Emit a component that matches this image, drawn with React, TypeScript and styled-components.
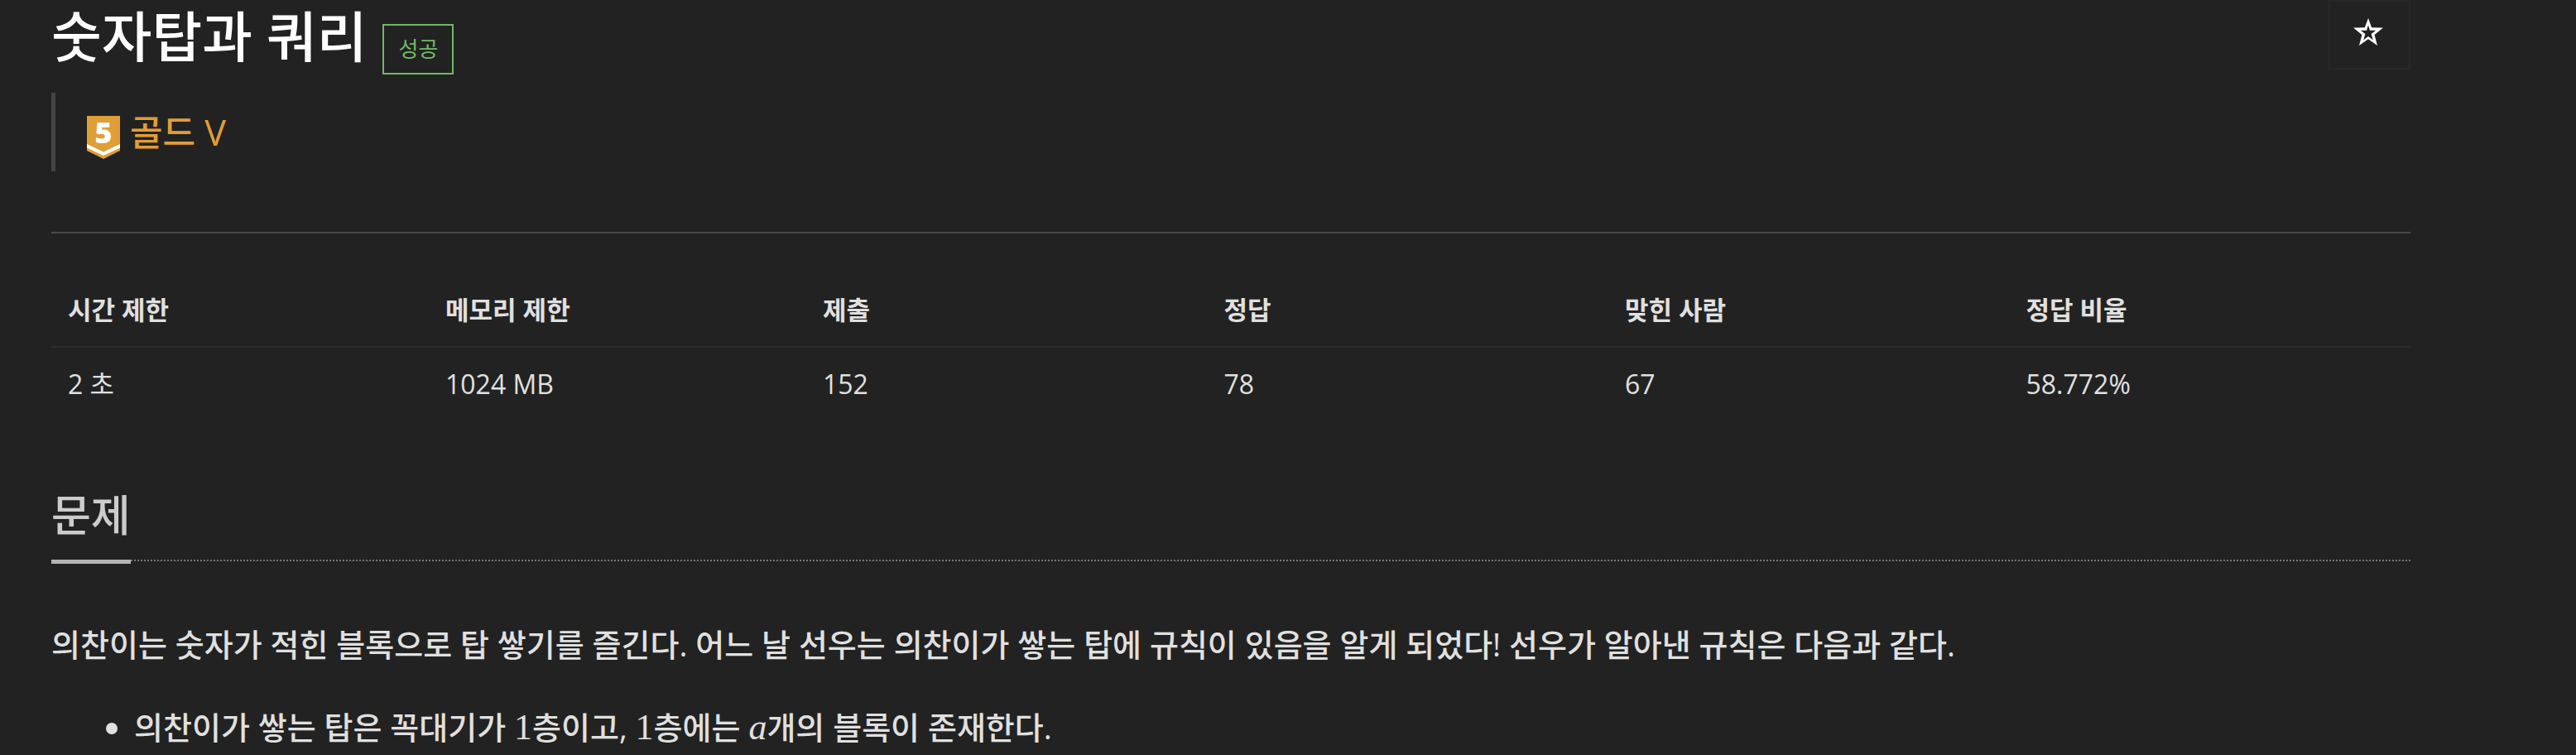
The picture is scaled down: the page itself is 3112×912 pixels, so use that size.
import React from "react";
import styled, { createGlobalStyle } from "styled-components";

const GlobalStyle = createGlobalStyle`
  *, *::before, *::after { box-sizing: border-box; }
  body {
    margin: 0;
    background: #222;
    color: #e0e0e0;
    font-family: "Open Sans", "Noto Sans CJK KR", sans-serif;
  }
`;

const Page = styled.main`
  padding: 0 200px 0 62px;
`;

const Header = styled.header`
  display: flex;
  justify-content: space-between;
  align-items: flex-start;
`;

const TitleGroup = styled.div`
  display: flex;
  align-items: flex-end;
  gap: 19px;
`;

const Title = styled.h1`
  margin: 0;
  padding-bottom: 4px;
  font-size: 66px;
  line-height: 86px;
  font-weight: 500;
  color: #fff;
`;

const ResultLabel = styled.span`
  border: 2px solid #72b866;
  padding: 0 17px;
  font-size: 26px;
  line-height: 57px;
  color: #72b866;
`;

const FavoriteButton = styled.button`
  display: flex;
  align-items: center;
  justify-content: center;
  width: 99px;
  height: 84px;
  padding: 0 4px 8px 0;
  border: 2px solid #272727;
  background: #222;
  cursor: pointer;
`;

const Tier = styled.blockquote`
  display: flex;
  align-items: center;
  gap: 12px;
  height: 95px;
  margin: 22px 0 73px;
  padding-left: 38px;
  border-left: 5px solid #444;
  font-size: 43px;
  line-height: 60px;
  font-weight: 500;
  color: #e09e37;

  svg {
    position: relative;
    top: 6px;
    overflow: visible;
  }
`;

const Divider = styled.hr`
  margin: 0 0 40px;
  border: 0;
  border-top: 2px solid #4a4a4a;
`;

const InfoTable = styled.table`
  width: 100%;
  table-layout: fixed;
  border-collapse: collapse;
  line-height: 56px;
  text-align: left;

  th {
    padding: 24px 20px 16px;
    border-bottom: 2px solid #2d2d2d;
    font-size: 31px;
    font-weight: 700;
  }

  td {
    padding: 16px 20px;
    font-size: 32px;
  }
`;

const Column = styled.col<{ $share: number }>`
  width: ${({ $share }) => $share}%;
`;

const SectionHeading = styled.div`
  display: flex;
  margin-top: 76px;
  border-bottom: 2px dotted #777;
`;

const SectionTitle = styled.h2`
  margin: 0 0 -5px;
  padding-bottom: 16px;
  border-bottom: 5px solid #b5b5b5;
  font-size: 52px;
  line-height: 76px;
  font-weight: 500;
  color: #ccc;
`;

const Description = styled.section`
  font-size: 38px;
  line-height: 60px;
  font-weight: 500;

  p {
    margin: 70px 0 40px;
  }

  ul {
    margin: 0;
    padding-left: 100px;
  }
`;

const MathText = styled.span`
  font-family: "Liberation Serif", serif;
  font-size: 44px;
  line-height: 1;
`;

const columns = [
  { name: "시간 제한", value: "2 초", share: 16 },
  { name: "메모리 제한", value: "1024 MB", share: 16 },
  { name: "제출", value: "152", share: 17 },
  { name: "정답", value: "78", share: 17 },
  { name: "맞힌 사람", value: "67", share: 17 },
  { name: "정답 비율", value: "58.772%", share: 17 },
];

function TierBadge() {
  return (
    <svg width="40" height="52" viewBox="0 0 40 52" aria-hidden="true">
      <path d="M0 0H40V42L20 52L0 42Z" fill="#e09e37" />
      <path d="M0 34L20 43.500L40 34V38.500L20 48L0 38.500Z" fill="#fff" />
      <text
        x="20"
        y="33"
        textAnchor="middle"
        fontFamily="Open Sans, sans-serif"
        fontSize="36"
        fontWeight="800"
        fill="#fff"
      >
        5
      </text>
    </svg>
  );
}

function StarIcon() {
  return (
    <svg width="36" height="33" viewBox="0 0 36 33" aria-hidden="true">
      <path
        fillRule="evenodd"
        fill="#fff"
        d="M18 0L22.200 11.300L36 11.600L25.600 20L29 33L18 25.300L7 33L10.400 20L0 11.600L13.800 11.300ZM18 8.400L16 14.700H8.800L14.400 19L12.300 26.300L18 22L23.700 26.300L21.600 19L27.200 14.700H20Z"
      />
    </svg>
  );
}

export default function App() {
  return (
    <>
      <GlobalStyle />
      <Page lang="ko">
        <Header>
          <TitleGroup>
            <Title>숫자탑과 쿼리</Title>
            <ResultLabel>성공</ResultLabel>
          </TitleGroup>
          <FavoriteButton type="button" aria-label="즐겨찾기">
            <StarIcon />
          </FavoriteButton>
        </Header>
        <Tier>
          <TierBadge />
          <span>골드 V</span>
        </Tier>
        <Divider />
        <InfoTable>
          <colgroup>
            {columns.map((c) => (
              <Column key={c.name} $share={c.share} />
            ))}
          </colgroup>
          <thead>
            <tr>
              {columns.map((c) => (
                <th key={c.name} scope="col">{c.name}</th>
              ))}
            </tr>
          </thead>
          <tbody>
            <tr>
              {columns.map((c) => (
                <td key={c.name}>{c.value}</td>
              ))}
            </tr>
          </tbody>
        </InfoTable>
        <SectionHeading>
          <SectionTitle>문제</SectionTitle>
        </SectionHeading>
        <Description>
          <p>
            의찬이는 숫자가 적힌 블록으로 탑 쌓기를 즐긴다. 어느 날 선우는 의찬이가 쌓는 탑에 규칙이 있음을 알게 되었다! 선우가 알아낸 규칙은 다음과 같다.
          </p>
          <ul>
            <li>
              의찬이가 쌓는 탑은 꼭대기가 <MathText>1</MathText>층이고, <MathText>1</MathText>층에는 <MathText as="i">a</MathText>개의 블록이 존재한다.
            </li>
          </ul>
        </Description>
      </Page>
    </>
  );
}
